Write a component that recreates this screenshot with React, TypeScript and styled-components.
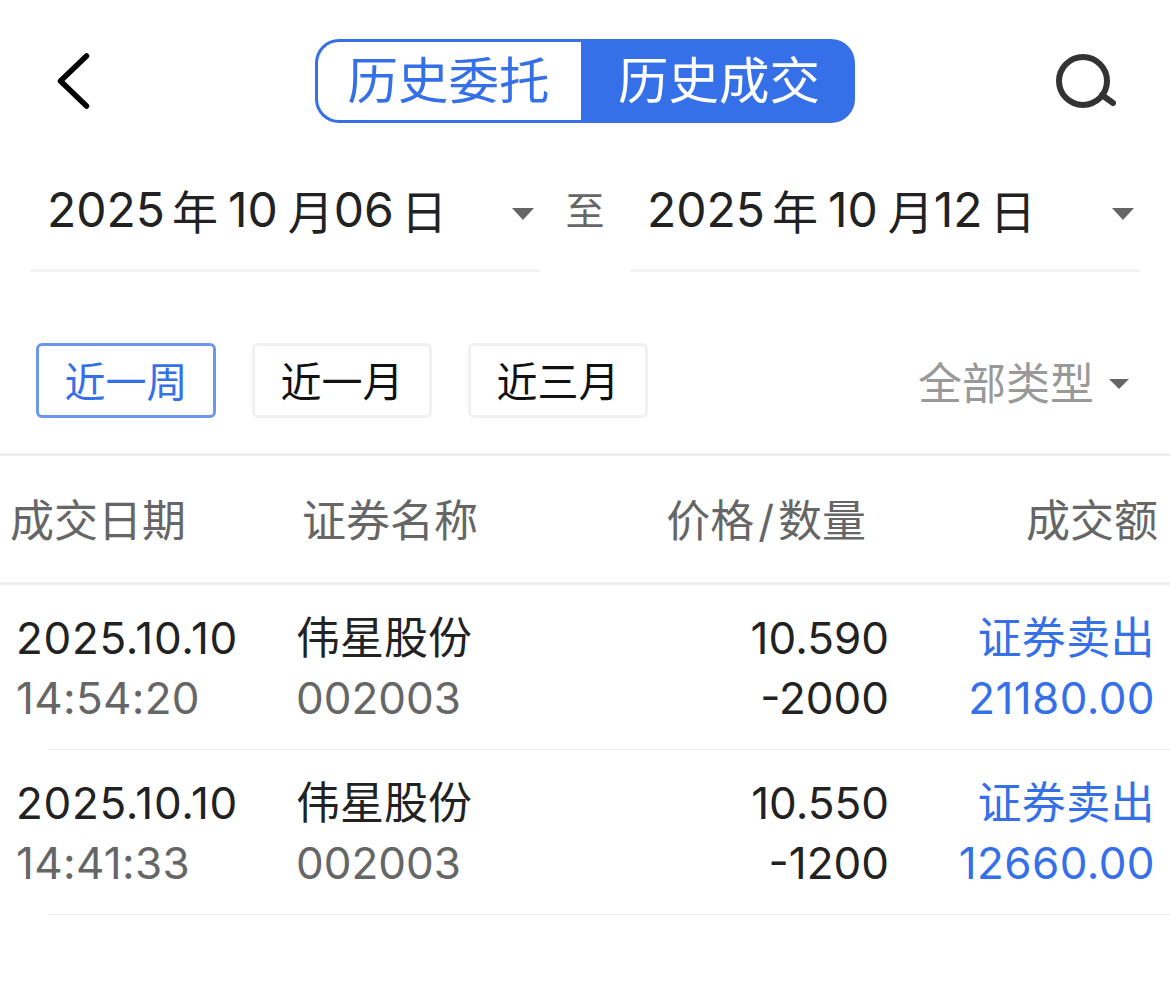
import React from "react";
import styled, { createGlobalStyle } from "styled-components";

const FONT = `Inter, "Noto Sans CJK SC", sans-serif`;
const BLUE = "#3570e8";

const Global = createGlobalStyle`
  html, body { margin: 0; padding: 0; background: #fff; }
  body { font-family: ${FONT}; }
`;

const Page = styled.div`
  width: 1170px;
  height: 1006px;
  background: #fff;
  overflow: hidden;
`;

const TopBar = styled.header`
  height: 84px;
  margin-top: 39px;
  padding: 0 54px 0 57px;
  display: flex;
  align-items: center;
`;

const BackIcon = styled.svg`
  display: block;
  flex: none;
`;

const SearchIcon = styled.svg`
  display: block;
  flex: none;
  margin-left: auto;
`;

const Segments = styled.div`
  width: 540px;
  height: 84px;
  margin-left: 224px;
  padding: 3px 0 3px 3px;
  display: flex;
  box-sizing: border-box;
  background: ${BLUE};
  border-radius: 24px;
  flex: none;
`;

const Segment = styled.div<{ $active?: boolean }>`
  box-sizing: border-box;
  width: ${(p) => (p.$active ? 274 : 263)}px;
  padding-left: ${(p) => (p.$active ? 2 : 0)}px;
  padding-right: ${(p) => (p.$active ? 0 : 2)}px;
  display: flex;
  align-items: center;
  justify-content: center;
  font-size: 50.5px;
  line-height: 78px;
  border-radius: 21px 0 0 21px;
  background: ${(p) => (p.$active ? "transparent" : "#fff")};
  color: ${(p) => (p.$active ? "#fff" : BLUE)};
`;

const DateRow = styled.section`
  margin-top: 42px;
  padding: 0 30px;
  display: flex;
  align-items: flex-start;
`;

const DateField = styled.div`
  box-sizing: border-box;
  width: 510px;
  height: 107px;
  padding: 0 6px 16px 17px;
  display: flex;
  align-items: center;
  justify-content: space-between;
  border-bottom: 3px solid #f3f3f3;
`;

const DateText = styled.div`
  font-size: 46px;
  color: #222;
  display: flex;
  align-items: center;
`;

const Year = styled.span`
  font-size: 48px;
  margin-right: 7px;
`;

const Month = styled.span`
  font-size: 48px;
  margin: 0 10px;
`;

const Day = styled.span`
  font-size: 48px;
  margin-right: 7px;
`;

const Arrow = styled.span<{ $size?: "sm" }>`
  flex: none;
  width: 0;
  height: 0;
  margin-top: ${(p) => (p.$size === "sm" ? 6 : 10)}px;
  border-style: solid;
  border-color: #666 transparent transparent;
  border-width: ${(p) => (p.$size === "sm" ? "10px 10px 0" : "12px 11px 0")};
`;

const ToLabel = styled.div`
  width: 90px;
  height: 92px;
  text-align: center;
  font-size: 39px;
  line-height: 92px;
  color: #666;
`;

const FilterRow = styled.section`
  margin-top: 71px;
  padding: 0 41px 0 36px;
  display: flex;
  align-items: center;
  gap: 36px;
`;

const FilterButton = styled.button<{ $active?: boolean }>`
  box-sizing: border-box;
  width: 180px;
  height: 75px;
  padding: 0 0 4px;
  background: #fff;
  border: 3px solid ${(p) => (p.$active ? "#6b98ee" : "#f0f0f0")};
  border-radius: 6px;
  font-family: ${FONT};
  font-size: 41px;
  color: ${(p) => (p.$active ? BLUE : "#111")};
`;

const TypeSelect = styled.div`
  margin-left: auto;
  display: flex;
  align-items: center;
  gap: 15px;
  font-size: 44px;
  color: #999;
`;

const TableHead = styled.div`
  box-sizing: border-box;
  margin-top: 35px;
  height: 132px;
  padding: 0 12px 2px 10px;
  display: grid;
  grid-template-columns: 292px 1fr 292px;
  align-items: center;
  border-top: 3px solid #eeeeee;
  border-bottom: 3px solid #eeeeee;
  font-size: 44px;
  color: #666;
`;

const HeadRight = styled.div`
  text-align: right;
`;

const HeadSplit = styled.div`
  display: flex;
  justify-content: space-between;
`;

const Slash = styled.span`
  margin: 0 4px;
`;

const Row = styled.div`
  box-sizing: border-box;
  height: 165px;
  padding: 23px 15px 0 16px;
  display: grid;
  grid-template-columns: 280px 200px 393px 266px;
  grid-auto-rows: 60px;
  font-size: 44px;
  color: #222;
  position: relative;
  &::after {
    content: "";
    position: absolute;
    left: 48px;
    right: 0;
    bottom: 0;
    height: 1px;
    background: #eeeeee;
  }
`;

const Cell = styled.div<{ $tone?: "main" | "sub" | "blue"; $right?: boolean; $track?: number }>`
  line-height: 60px;
  white-space: nowrap;
  letter-spacing: ${(p) => p.$track ?? 0}px;
  text-align: ${(p) => (p.$right ? "right" : "left")};
  color: ${(p) => (p.$tone === "sub" ? "#666" : p.$tone === "blue" ? BLUE : "#222")};
`;

const DateValue = ({ y, m, d }: { y: string; m: string; d: string }) => (
  <DateText>
    <Year>{y}</Year>年<Month>{m}</Month>月<Day>{d}</Day>日
  </DateText>
);

const trades = [
  { date: "2025.10.10", time: "14:54:20", price: "10.590", qty: "-2000", amount: "21180.00" },
  { date: "2025.10.10", time: "14:41:33", price: "10.550", qty: "-1200", amount: "12660.00" },
];

export default function App() {
  return (
    <Page>
      <Global />
      <TopBar>
        <BackIcon width="34" height="56" viewBox="0 0 34 56" fill="none">
          <path d="M29.5 3 L3.5 28 L29.5 53" stroke="#000" strokeWidth="5.5" strokeLinecap="round" strokeLinejoin="round" />
        </BackIcon>
        <Segments>
          <Segment>历史委托</Segment>
          <Segment $active>历史成交</Segment>
        </Segments>
        <SearchIcon width="60" height="56" viewBox="0 0 60 56" fill="none">
          <circle cx="27" cy="28" r="24" stroke="#333" strokeWidth="6" />
          <path d="M46 42 L57 50" stroke="#333" strokeWidth="6" strokeLinecap="round" />
        </SearchIcon>
      </TopBar>

      <DateRow>
        <DateField>
          <DateValue y="2025" m="10" d="06" />
          <Arrow />
        </DateField>
        <ToLabel>至</ToLabel>
        <DateField>
          <DateValue y="2025" m="10" d="12" />
          <Arrow />
        </DateField>
      </DateRow>

      <FilterRow>
        <FilterButton $active>近一周</FilterButton>
        <FilterButton>近一月</FilterButton>
        <FilterButton>近三月</FilterButton>
        <TypeSelect>
          全部类型
          <Arrow $size="sm" />
        </TypeSelect>
      </FilterRow>

      <TableHead>
        <div>成交日期</div>
        <HeadSplit>
          <span>证券名称</span>
          <span>价格<Slash>/</Slash>数量</span>
        </HeadSplit>
        <HeadRight>成交额</HeadRight>
      </TableHead>

      {trades.map((t) => (
        <Row key={t.time}>
          <Cell $track={0.7}>{t.date}</Cell>
          <Cell>伟星股份</Cell>
          <Cell $right>{t.price}</Cell>
          <Cell $tone="blue" $right $track={0.4}>证券卖出</Cell>
          <Cell $tone="sub" $track={0.3}>{t.time}</Cell>
          <Cell $tone="sub">002003</Cell>
          <Cell $right>{t.qty}</Cell>
          <Cell $tone="blue" $right $track={0.4}>{t.amount}</Cell>
        </Row>
      ))}
    </Page>
  );
}
